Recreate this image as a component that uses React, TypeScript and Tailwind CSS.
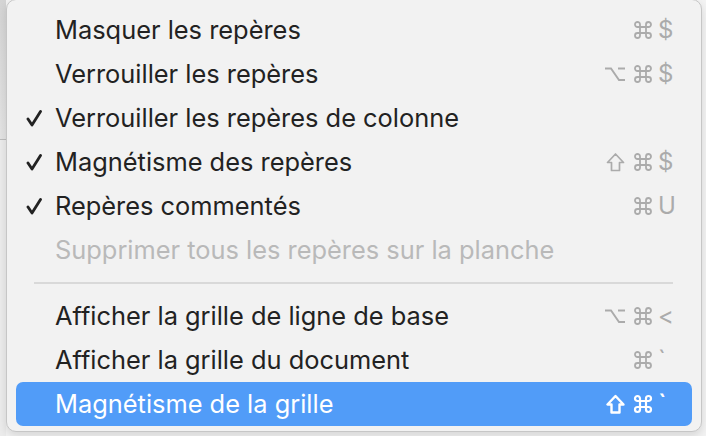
import React from 'react';

type Item = {
  label: string;
  checked?: boolean;
  disabled?: boolean;
  active?: boolean;
  mod?: 'opt' | 'shift';
  cmd?: boolean;
  keyChar?: string;
};

const topItems: Item[] = [
  { label: 'Masquer les repères', cmd: true, keyChar: '$' },
  { label: 'Verrouiller les repères', mod: 'opt', cmd: true, keyChar: '$' },
  { label: 'Verrouiller les repères de colonne', checked: true },
  { label: 'Magnétisme des repères', checked: true, mod: 'shift', cmd: true, keyChar: '$' },
  { label: 'Repères commentés', checked: true, cmd: true, keyChar: 'U' },
  { label: 'Supprimer tous les repères sur la planche', disabled: true },
];

const bottomItems: Item[] = [
  { label: 'Afficher la grille de ligne de base', mod: 'opt', cmd: true, keyChar: '<' },
  { label: 'Afficher la grille du document', cmd: true, keyChar: '`' },
  { label: 'Magnétisme de la grille', active: true, mod: 'shift', cmd: true, keyChar: '`' },
];

function Check() {
  return (
    <svg width="16" height="20" viewBox="0 0 16 20" className="text-[#222222]">
      <path d="M2 11 L6 17 L14.5 3.5" fill="none" stroke="currentColor" strokeWidth="2.8" strokeLinecap="round" strokeLinejoin="round" />
    </svg>
  );
}

function CmdIcon({ bold }: { bold?: boolean }) {
  return (
    <svg width="20" height="20" viewBox="0 0 20 20">
      <path
        d="M7 7V4.5A2.5 2.5 0 1 0 4.5 7H15.5A2.5 2.5 0 1 0 13 4.5V15.5A2.5 2.5 0 1 0 15.5 13H4.5A2.5 2.5 0 1 0 7 15.5Z"
        fill="none"
        stroke="currentColor"
        strokeWidth={bold ? 2.2 : 1.8}
        strokeLinejoin="round"
      />
    </svg>
  );
}

function OptIcon() {
  return (
    <svg width="22" height="20" viewBox="0 0 22 20">
      <path d="M1 4.5 H7 L15 16 H21 M14 4.5 H21" fill="none" stroke="currentColor" strokeWidth="1.9" />
    </svg>
  );
}

function ShiftIcon({ bold }: { bold?: boolean }) {
  return (
    <svg width="19" height="21" viewBox="0 0 19 21">
      <path d="M9.5 2 L1.5 10.5 H5.5 V18.5 H13.5 V10.5 H17.5 Z" fill="none" stroke="currentColor" strokeWidth={bold ? 2.4 : 1.7} strokeLinejoin="round" />
    </svg>
  );
}

function MenuRow({ item }: { item: Item }) {
  const textColor = item.active ? 'text-white' : item.disabled ? 'text-[#b9b9b9]' : 'text-[#222222]';
  const keyColor = item.active ? 'text-white' : 'text-[#ababab]';
  return (
    <div className={`flex h-[44px] items-center rounded-[7px] ${item.active ? 'bg-[#519cf8]' : ''}`}>
      <div className="flex w-[39px] justify-end pr-[13px]">{item.checked && <Check />}</div>
      <span className={`flex-1 text-[25.4px] leading-none ${textColor}`}>{item.label}</span>
      {item.keyChar && (
        <div className={`flex items-center pr-[16px] ${keyColor}`}>
          <span className="flex w-[30px] justify-center">
            {item.mod === 'opt' && <OptIcon />}
            {item.mod === 'shift' && <ShiftIcon bold={item.active} />}
          </span>
          <span className="flex w-[26px] justify-center">{item.cmd && <CmdIcon bold={item.active} />}</span>
          <span className={`w-[20px] pl-[2px] text-left text-[24px] leading-none ${item.active ? 'font-semibold' : ''}`}>
            {item.keyChar}
          </span>
        </div>
      )}
    </div>
  );
}

export default function App() {
  return (
    <div className="flex h-[436px] w-[706px] overflow-hidden bg-[#f3f3f3] font-['Inter',sans-serif]">
      <div className="flex w-[6px] flex-col">
        <div className="h-[140px] border-b border-[#bdbdbd] bg-gradient-to-b from-[#d4d4d4] to-[#e4e4e4]" />
        <div className="flex-1 bg-[#ececec]" />
      </div>
      <div className="-mt-[1px] mr-[4px] h-[433px] flex-1 rounded-[10px] border border-[#c6c6c6] bg-[#f2f2f2] px-[9px] pt-[8px] pb-[5px] shadow-[0_4px_10px_rgba(0,0,0,0.12)]">
        {topItems.map((it) => (
          <MenuRow key={it.label} item={it} />
        ))}
        <div className="flex h-[22px] items-center pl-[18px] pr-[19px]">
          <div className="h-[2px] w-full bg-[#d9d9d9]" />
        </div>
        {bottomItems.map((it) => (
          <MenuRow key={it.label} item={it} />
        ))}
      </div>
    </div>
  );
}
